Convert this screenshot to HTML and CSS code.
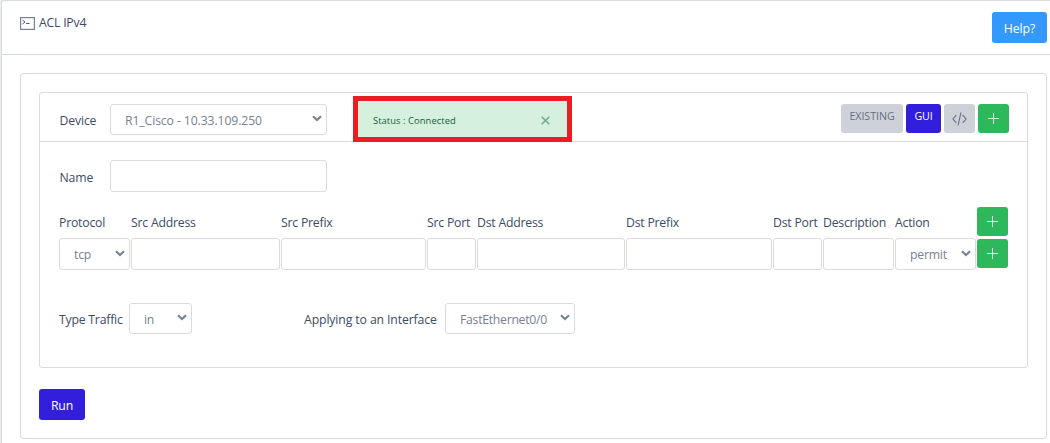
FILE: index.html
```html
<!DOCTYPE html>
<html lang="en">
<head>
<meta charset="utf-8">
<title>ACL IPv4</title>
<link rel="stylesheet" href="styles.css">
</head>
<body>
<svg width="0" height="0" class="sprite">
  <symbol id="chev" viewBox="0 0 10 7"><path d="M1 1.2 5 5 9 1.2" fill="none" stroke="#768192" stroke-width="2.1"/></symbol>
  <symbol id="plus" viewBox="0 0 11 11"><path d="M0 5.5H11M5.5 0V11" fill="none" stroke="#d5f1de" stroke-width="1"/></symbol>
</svg>
<main class="page">
  <header class="top">
    <h1 class="title">
      <svg class="term" viewBox="0 0 15 13"><rect x=".6" y=".6" width="13.8" height="11.8" fill="none" stroke="#768192" stroke-width="1.2"/><path d="M2.5 3 5 5 2.5 7M6 6.5H9.5" fill="none" stroke="#4f5d73"/></svg>
      <span class="t-title">ACL IPv4</span>
    </h1>
    <button class="btn help">Help?</button>
  </header>
  <section class="outer">
    <div class="inner">
      <div class="toolbar">
        <label class="lab">Device</label>
        <div class="select device"><span>R1_Cisco - 10.33.109.250</span><svg class="chev"><use href="#chev"/></svg></div>
        <div class="status"><span>Status : Connected</span><svg class="close" viewBox="0 0 9 9"><path d="M.7.7 8.3 8.3M8.3.7.7 8.3" fill="none" stroke="#74ab89" stroke-width="1.6"/></svg></div>
        <div class="modes">
          <button class="btn mode existing">EXISTING</button>
          <button class="btn mode gui">GUI</button>
          <button class="btn mode code"><svg viewBox="0 0 15 14"><path d="M4.3 3.2.9 7 4.3 10.8M10.7 3.2 14.1 7 10.7 10.8M9 .5 6 13.5" fill="none" stroke="#636f83" stroke-width="1.1"/></svg></button>
          <button class="btn add"><svg><use href="#plus"/></svg></button>
        </div>
      </div>
      <div class="namerow"><label class="lab">Name</label><input class="field"></div>
      <div class="rules">
        <span>Protocol</span><span>Src Address</span><span>Src Prefix</span><span>Src Port</span><span>Dst Address</span><span>Dst Prefix</span><span>Dst Port</span><span>Description</span><span>Action</span>
        <button class="btn add"><svg><use href="#plus"/></svg></button>
        <div class="select"><span>tcp</span><svg class="chev"><use href="#chev"/></svg></div>
        <input class="field"><input class="field"><input class="field"><input class="field"><input class="field"><input class="field"><input class="field">
        <div class="select"><span>permit</span><svg class="chev"><use href="#chev"/></svg></div>
        <button class="btn add row-add"><svg><use href="#plus"/></svg></button>
      </div>
      <div class="apply">
        <label class="lab-traffic">Type Traffic</label>
        <div class="select traffic"><span>in</span><svg class="chev"><use href="#chev"/></svg></div>
        <label class="lab-iface">Applying to an Interface</label>
        <div class="select iface"><span>FastEthernet0/0</span><svg class="chev"><use href="#chev"/></svg></div>
      </div>
    </div>
    <button class="btn run">Run</button>
  </section>
</main>
</body>
</html>
```
FILE: styles.css
```css
* { box-sizing: border-box; }
body {
  margin: 0;
  height: 443px;
  overflow: hidden;
  background: #ebedef;
  color: #3c4b64;
  font: 12.25px/18px "Open Sans", "Noto Sans", sans-serif;
  letter-spacing: -0.22px;
}
.sprite { position: absolute; }
.page {
  height: 460px;
  margin-left: 1px;
  background: #fff;
  border: solid #d8dbe0;
  border-width: 1px 0 0 1px;
  border-top-left-radius: 3px;
}
.top {
  display: flex;
  justify-content: space-between;
  align-items: flex-start;
  height: 54px;
  padding: 11px 3px 0 18px;
  border-bottom: 1px solid #d8dbe0;
}
.title { display: flex; align-items: center; gap: 4px; margin: 2px 0 0; font: inherit; }
.term { width: 15px; height: 13px; }
.btn {
  display: flex;
  justify-content: center;
  align-items: center;
  padding: 0;
  border: 0;
  border-radius: 3px;
  color: #fff;
  font: inherit;
  letter-spacing: inherit;
}
.help { width: 55px; height: 31px; padding-top: 2px; background: #39f; letter-spacing: -0.1px; }
.outer {
  width: 1027px;
  height: 366px;
  margin: 18px 0 0 18px;
  padding: 18px;
  border: 1px solid #d8dbe0;
  border-radius: 3px;
}
.inner { width: 989px; height: 276px; border: 1px solid #d8dbe0; border-radius: 3px; }
.toolbar {
  display: flex;
  align-items: flex-start;
  height: 49px;
  padding: 11px 18px 0 19px;
  border-bottom: 1px solid #d8dbe0;
}
.lab { width: 51px; padding: 8px 0 0 .5px; letter-spacing: -0.15px; }
.select, .field {
  min-width: 0;
  height: 32px;
  padding: 0;
  border: 1px solid #d8dbe0;
  border-radius: 3px;
  background: #fff;
}
.select {
  display: flex;
  justify-content: space-between;
  align-items: center;
  padding: 2px 4px 0 14px;
  color: #768192;
}
.chev { width: 10px; height: 7px; margin-bottom: 4px; }
.device { width: 217px; height: 31px; letter-spacing: -0.12px; }
.status {
  display: flex;
  justify-content: space-between;
  align-items: center;
  width: 219px;
  height: 46px;
  margin: -8px 0 0 26px;
  padding: 3px 17px 0 15px;
  border: 5px solid #ed1c24;
  background: #d5f1de;
  color: #18603a;
  font-size: 9.4px;
  letter-spacing: 0.06px;
}
.close { width: 9px; height: 9px; }
.modes { display: flex; gap: 3px; margin-left: auto; }
.mode { height: 29px; background: #ced2d8; color: #636f83; font-size: 10.7px; padding-bottom: 5px; }
.existing { width: 62px; letter-spacing: -0.05px; }
.gui { width: 35px; background: #321fdb; color: #fff; }
.code { width: 31px; padding: 0; }
.code svg { width: 15px; height: 14px; }
.add { width: 31px; height: 29px; background: #2eb85c; }
.add svg { width: 11px; height: 11px; }
.row-add { margin-top: 1px; }
.namerow { display: flex; margin-top: 18px; padding-left: 19px; }
.namerow .lab { padding-top: 9px; }
.namerow .field { width: 217px; }
.rules {
  display: grid;
  grid-template-columns: 70.5px 148.5px 144.5px 48.5px 147.5px 145.5px 48.5px 70.5px 80.5px 31px;
  grid-template-rows: 31px 32px;
  column-gap: 1.5px;
  margin: 15px 0 0 19px;
}
.rules > span { padding-top: 7px; white-space: nowrap; }
.apply { display: flex; margin: 33px 0 0 19px; white-space: nowrap; }
.apply .select { height: 31px; }
.apply label { padding-top: 8px; }
.lab-traffic { width: 70px; }
.traffic { width: 63px; }
.lab-iface { width: 141px; margin-left: 112px; letter-spacing: -0.12px; }
.iface { width: 130px; letter-spacing: -0.28px; }
.run { width: 46px; height: 31px; margin-top: 21px; padding-top: 2px; background: #321fdb; }
```
